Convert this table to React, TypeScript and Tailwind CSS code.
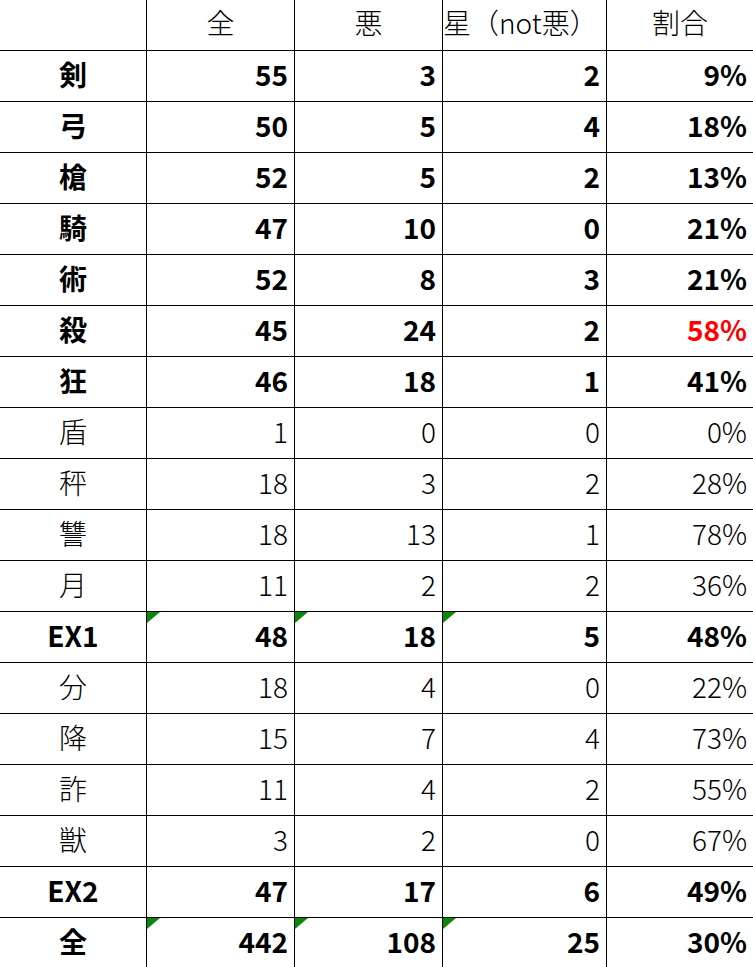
import { FC } from "react"

type Row = { label: string; all: number; bad: number; star: number; pct: string; bold: boolean; flag?: boolean; red?: boolean }

const rows: Row[] = [
  { label: "剣", all: 55, bad: 3, star: 2, pct: "9%", bold: true },
  { label: "弓", all: 50, bad: 5, star: 4, pct: "18%", bold: true },
  { label: "槍", all: 52, bad: 5, star: 2, pct: "13%", bold: true },
  { label: "騎", all: 47, bad: 10, star: 0, pct: "21%", bold: true },
  { label: "術", all: 52, bad: 8, star: 3, pct: "21%", bold: true },
  { label: "殺", all: 45, bad: 24, star: 2, pct: "58%", bold: true, red: true },
  { label: "狂", all: 46, bad: 18, star: 1, pct: "41%", bold: true },
  { label: "盾", all: 1, bad: 0, star: 0, pct: "0%", bold: false },
  { label: "秤", all: 18, bad: 3, star: 2, pct: "28%", bold: false },
  { label: "讐", all: 18, bad: 13, star: 1, pct: "78%", bold: false },
  { label: "月", all: 11, bad: 2, star: 2, pct: "36%", bold: false },
  { label: "EX1", all: 48, bad: 18, star: 5, pct: "48%", bold: true, flag: true },
  { label: "分", all: 18, bad: 4, star: 0, pct: "22%", bold: false },
  { label: "降", all: 15, bad: 7, star: 4, pct: "73%", bold: false },
  { label: "詐", all: 11, bad: 4, star: 2, pct: "55%", bold: false },
  { label: "獣", all: 3, bad: 2, star: 0, pct: "67%", bold: false },
  { label: "EX2", all: 47, bad: 17, star: 6, pct: "49%", bold: true },
  { label: "全", all: 442, bad: 108, star: 25, pct: "30%", bold: true, flag: true },
]

// 緑の三角（数式エラー表示のやつ）
const Flag: FC = () => (
  <span className="absolute left-0 top-0 w-0 h-0 border-t-[11px] border-t-[#0b870b] border-r-[13px] border-r-transparent" />
)

const Num: FC<{ v: string | number; w: string; flag?: boolean; red?: boolean; last?: boolean }> = ({ v, w, flag, red, last }) => (
  <div className={`relative flex items-center justify-end pr-[6px] pb-[5px] ${w} ${last ? "" : "border-r border-black"} ${red ? "text-[#ff0000]" : ""}`}>
    {flag && <Flag />}
    {v}
  </div>
)

const App: FC = () => {
  return (
    <div className="w-[753px] h-[967px] overflow-hidden bg-white text-black text-[28px] leading-none" style={{ fontFamily: '"Noto Sans CJK JP", "Noto Sans", sans-serif' }}>
      {/* ヘッダー */}
      <div className="flex h-[51px] border-b border-black font-light">
        <div className="w-[147px] border-r border-black" />
        <div className="w-[148px] border-r border-black flex items-center justify-center pb-[7px]">全</div>
        <div className="w-[148px] border-r border-black flex items-center justify-center pb-[7px]">悪</div>
        <div className="w-[164px] border-r border-black flex items-center justify-start pb-[7px] whitespace-nowrap overflow-hidden">星（not悪）</div>
        <div className="flex-1 flex items-center justify-center pb-[7px]">割合</div>
      </div>
      {rows.map((r) => (
        <div key={r.label} className={`flex h-[51px] border-b border-black ${r.bold ? "font-bold" : "font-light"}`}>
          <div className="w-[147px] border-r border-black flex items-center justify-center pb-[5px]">{r.label}</div>
          <Num v={r.all} w="w-[148px]" flag={r.flag} />
          <Num v={r.bad} w="w-[148px]" flag={r.flag} />
          <Num v={r.star} w="w-[164px]" flag={r.flag} />
          <Num v={r.pct} w="flex-1" red={r.red} last />
        </div>
      ))}
    </div>
  )
}

export default App
